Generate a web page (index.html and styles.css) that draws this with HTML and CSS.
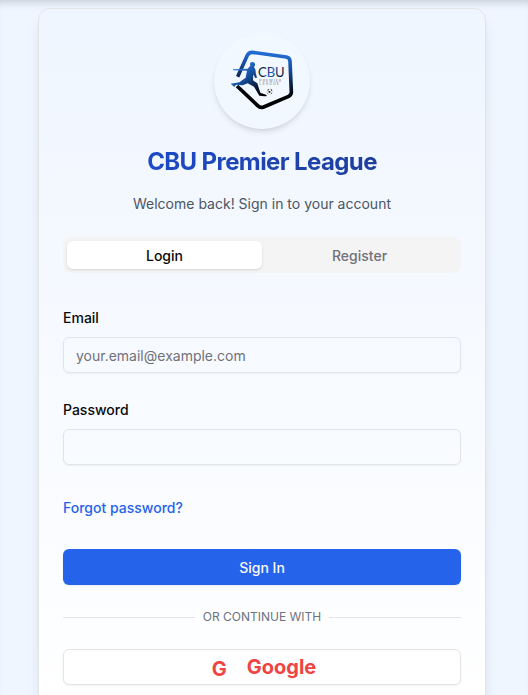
FILE: index.html
```html
<!DOCTYPE html>
<html lang="en">
<head>
<meta charset="utf-8">
<meta name="viewport" content="width=device-width, initial-scale=1">
<title>CBU Premier League</title>
<link rel="stylesheet" href="styles.css">
</head>
<body>
<main class="page">
  <section class="card">
    <header class="intro">
      <svg class="logo" viewBox="36 9 288 288" role="img" aria-label="CBU Premier League logo">
        <defs>
          <linearGradient id="frame" gradientUnits="userSpaceOnUse" x1="190" y1="60" x2="170" y2="240">
            <stop offset="0" stop-color="#2474dc"/>
            <stop offset="0.25" stop-color="#174fa5"/>
            <stop offset="0.55" stop-color="#0d1c35"/>
            <stop offset="0.75" stop-color="#000"/>
          </linearGradient>
          <linearGradient id="body" gradientUnits="userSpaceOnUse" x1="105" y1="105" x2="180" y2="195">
            <stop offset="0" stop-color="#2f83e4"/>
            <stop offset="0.4" stop-color="#164f9f"/>
            <stop offset="0.75" stop-color="#091a35"/>
            <stop offset="1" stop-color="#000"/>
          </linearGradient>
          <linearGradient id="word" gradientUnits="userSpaceOnUse" x1="168" y1="110" x2="246" y2="145">
            <stop offset="0" stop-color="#0a1328"/>
            <stop offset="0.35" stop-color="#10284f"/>
            <stop offset="0.5" stop-color="#1f68cf"/>
            <stop offset="0.7" stop-color="#102b58"/>
            <stop offset="1" stop-color="#0a1226"/>
          </linearGradient>
        </defs>
        <path d="M107 140 L136 76 Q141 66 152 67 L253 81 Q263 83 264 93 L268 184 Q269 194 260 199 L185 231 Q175 235 167 227 L105 168" fill="none" stroke="url(#frame)" stroke-width="11" stroke-linejoin="round"/>
        <path d="M92 118 L137 116 L145 107 Q141 96 151 96 Q160 96 159 106 L156 112 Q162 118 161 128 L165 143 L160 144 L154 133 L153 151 L166 160 L175 188 L192 194 Q198 199 188 199 L172 197 L156 170 L137 160 L122 166 L102 164 L97 171 L86 161 L112 157 L131 143 L135 122 L94 121 Z" fill="url(#body)"/>
        <text class="logo-name" x="168" y="140" fill="url(#word)">CBU</text>
        <text class="logo-tag" x="172" y="155">P R E M I E R</text>
        <text class="logo-tag" x="172" y="166">L E A G U E</text>
        <circle cx="203" cy="185" r="8" fill="#fff" stroke="#9a9ea4" stroke-width="1"/>
        <path d="M200 183h5l1 4-3 2-4-2zM196 180l4-3 1 3-3 2zM207 177l4 4-2 2-3-3zM196 188l3 4-4-2zM207 191l3-4v4z" fill="#222"/>
      </svg>
      <h1 class="title">CBU Premier League</h1>
      <p class="subtitle">Welcome back! Sign in to your account</p>
    </header>
    <div class="tabs" role="tablist">
      <button class="tab tab-active" type="button" role="tab" aria-selected="true">Login</button>
      <button class="tab" type="button" role="tab" aria-selected="false">Register</button>
    </div>
    <form class="form">
      <div class="field">
        <label for="email">Email</label>
        <input id="email" type="email" placeholder="your.email@example.com">
      </div>
      <div class="field">
        <label for="password">Password</label>
        <input id="password" type="password">
      </div>
      <a class="forgot" href="#">Forgot password?</a>
      <button class="submit" type="submit">Sign In</button>
    </form>
    <div class="divider"><span>OR CONTINUE WITH</span></div>
    <button class="google" type="button"><span class="google-mark">G</span><span>Google</span></button>
  </section>
</main>
</body>
</html>
```
FILE: styles.css
```css
* {
  box-sizing: border-box;
}

body {
  margin: 0;
  font-family: Inter, "Liberation Sans", sans-serif;
  font-size: 14px;
  line-height: 20px;
  color: #09090b;
}

button,
input {
  font: inherit;
}

.page {
  height: 100vh;
  overflow: hidden;
  padding: 8px 20px 0 16px;
  background: #eff6ff;
  box-shadow: inset 0 8px 8px -6px rgba(30, 41, 59, 0.22);
}

.card {
  max-width: 448px;
  margin: 0 auto;
  padding: 24px;
  border: 1px solid #e4e4e7;
  border-radius: 12px;
  background: linear-gradient(#eff6ff, #f5f9ff 40%, #fff);
  box-shadow: 0 10px 15px -3px rgba(0, 0, 0, 0.1), 0 4px 6px -4px rgba(0, 0, 0, 0.1);
}

.intro {
  display: flex;
  flex-direction: column;
  align-items: center;
  text-align: center;
}

.logo {
  width: 96px;
  height: 96px;
  border-radius: 50%;
  background: #f2f8ff;
  box-shadow: 0 4px 6px -1px rgba(0, 0, 0, 0.1), 0 2px 4px -2px rgba(0, 0, 0, 0.1);
}

.logo-name {
  font-family: Lato, sans-serif;
  font-size: 39px;
}

.logo-tag {
  font-size: 11px;
  fill: #747b87;
}

.title {
  align-self: stretch;
  margin: 17px 0 0;
  font-size: 24px;
  line-height: 32px;
  font-weight: 700;
  letter-spacing: -0.025em;
  color: transparent;
  background: linear-gradient(to right, #1d4ed8, #1e3a8a);
  background-clip: text;
}

.subtitle {
  margin: 16px 0 0;
  color: #4b5563;
}

.tabs {
  display: grid;
  grid-template-columns: 1fr 1fr;
  height: 36px;
  margin-top: 23px;
  padding: 4px;
  border-radius: 8px;
  background: #f4f4f5;
}

.tab {
  padding: 5px 12px 3px;
  border: 0;
  border-radius: 6px;
  background: transparent;
  font-weight: 500;
  color: #71717a;
}

.tab-active {
  background: #fff;
  color: #09090b;
  box-shadow: 0 1px 3px rgba(0, 0, 0, 0.1), 0 1px 2px -1px rgba(0, 0, 0, 0.1);
}

.form {
  display: flex;
  flex-direction: column;
  gap: 24px;
  margin-top: 32px;
}

.field {
  display: flex;
  flex-direction: column;
  gap: 6px;
}

.field label {
  line-height: 26px;
  font-weight: 500;
}

.field input {
  width: 100%;
  height: 36px;
  padding: 4px 12px;
  border: 1px solid #e4e4e7;
  border-radius: 6px;
  background: transparent;
  box-shadow: 0 1px 2px rgba(0, 0, 0, 0.05);
}

.field input::placeholder {
  color: #71717a;
}

.forgot {
  align-self: flex-start;
  margin: 9px 0 7px;
  font-weight: 500;
  color: #2563eb;
  text-decoration: none;
}

.submit {
  height: 36px;
  padding: 2px 12px 0;
  border: 0;
  border-radius: 6px;
  background: #2563eb;
  color: #fafafa;
  font-weight: 500;
  box-shadow: 0 1px 2px rgba(0, 0, 0, 0.08);
}

.divider {
  display: flex;
  align-items: center;
  margin: 24px 0;
  font-size: 12px;
  line-height: 16px;
  color: #6b7280;
}

.divider::before,
.divider::after {
  content: "";
  flex: 1;
  border-top: 1px solid #e4e4e7;
}

.divider span {
  padding: 0 8px;
  background: #fff;
}

.google {
  display: flex;
  align-items: center;
  justify-content: center;
  gap: 20px;
  width: 100%;
  height: 36px;
  padding: 0 8px 0 12px;
  border: 1px solid #e4e4e7;
  border-radius: 6px;
  background: #fff;
  box-shadow: 0 1px 2px rgba(0, 0, 0, 0.05);
  font-size: 20px;
  line-height: 28px;
  font-weight: 700;
  color: #ef4444;
}

.google-mark {
  padding-top: 4px;
}
```
